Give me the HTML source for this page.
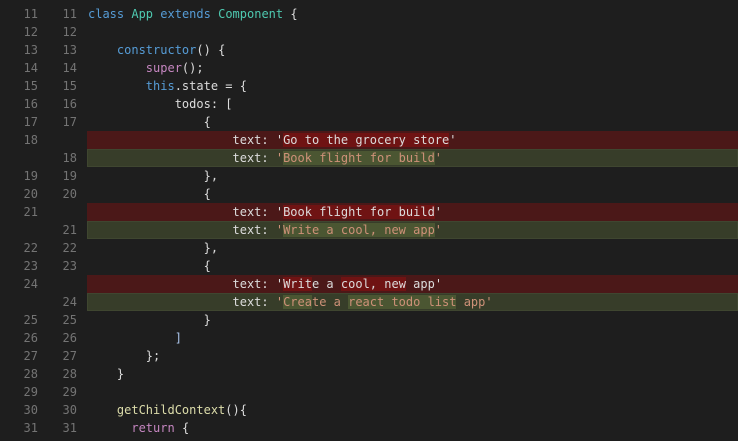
<!DOCTYPE html>
<html><head><meta charset="utf-8"><style>
html,body{margin:0;padding:0;background:#1e1e1e;width:738px;height:441px;overflow:hidden}
body{font-family:"DejaVu Sans Mono","Liberation Mono",monospace;font-size:12px;color:#dcdcdc}
.r{position:absolute;left:0;width:738px;height:18px;line-height:18px;white-space:pre}
.n1,.n2{position:absolute;top:0;width:30px;text-align:right;color:#747474}
.n1{left:8px}.n2{left:47px}
.c{position:absolute;left:88px;top:0}
.bg{position:absolute;left:87px;top:0;right:0;height:18px}
.del .bg{background:#4b1818}
.add .bg{background:#373d29;box-shadow:inset 0 0 0 1px #3f4630}
.del i{font-style:normal;background:#6f1313}
.add i{font-style:normal;background:#4b5632}
.k{color:#569cd6}.t{color:#4ec9b0}.p{color:#c586c0}.f{color:#dcdcaa}.s{color:#ce9178}
.del .s{color:#e8e8e8}
</style></head><body>
<div class="r" style="top:-13px"><span class="n1">10</span><span class="n2">10</span></div>
<div class="r" style="top:5px"><span class="n1">11</span><span class="n2">11</span><span class="c"><span class="k">class</span> <span class="t">App</span> <span class="k">extends</span> <span class="t">Component</span> {</span></div>
<div class="r" style="top:23px"><span class="n1">12</span><span class="n2">12</span></div>
<div class="r" style="top:41px"><span class="n1">13</span><span class="n2">13</span><span class="c">    <span class="k">constructor</span>() {</span></div>
<div class="r" style="top:59px"><span class="n1">14</span><span class="n2">14</span><span class="c">        <span class="p">super</span>();</span></div>
<div class="r" style="top:77px"><span class="n1">15</span><span class="n2">15</span><span class="c">        <span class="k">this</span>.state = {</span></div>
<div class="r" style="top:95px"><span class="n1">16</span><span class="n2">16</span><span class="c">            todos: [</span></div>
<div class="r" style="top:113px"><span class="n1">17</span><span class="n2">17</span><span class="c">                {</span></div>
<div class="r del" style="top:131px"><div class="bg"></div><span class="n1">18</span><span class="c">                    text: '<i>Go to the grocery store</i>'</span></div>
<div class="r add" style="top:149px"><div class="bg"></div><span class="n2">18</span><span class="c">                    text: <span class="s">'<i>Book flight for build</i>'</span></span></div>
<div class="r" style="top:167px"><span class="n1">19</span><span class="n2">19</span><span class="c">                },</span></div>
<div class="r" style="top:185px"><span class="n1">20</span><span class="n2">20</span><span class="c">                {</span></div>
<div class="r del" style="top:203px"><div class="bg"></div><span class="n1">21</span><span class="c">                    text: '<i>Book flight for build</i>'</span></div>
<div class="r add" style="top:221px"><div class="bg"></div><span class="n2">21</span><span class="c">                    text: <span class="s">'<i>Write a cool, new app</i>'</span></span></div>
<div class="r" style="top:239px"><span class="n1">22</span><span class="n2">22</span><span class="c">                },</span></div>
<div class="r" style="top:257px"><span class="n1">23</span><span class="n2">23</span><span class="c">                {</span></div>
<div class="r del" style="top:275px"><div class="bg"></div><span class="n1">24</span><span class="c">                    text: '<i>Writ</i>e a <i>cool, new</i> app'</span></div>
<div class="r add" style="top:293px"><div class="bg"></div><span class="n2">24</span><span class="c">                    text: <span class="s">'<i>Crea</i>te a <i>react todo list</i> app'</span></span></div>
<div class="r" style="top:311px"><span class="n1">25</span><span class="n2">25</span><span class="c">                }</span></div>
<div class="r" style="top:329px"><span class="n1">26</span><span class="n2">26</span><span class="c">            <span style="color:#a9c4ea">]</span></span></div>
<div class="r" style="top:347px"><span class="n1">27</span><span class="n2">27</span><span class="c">        };</span></div>
<div class="r" style="top:365px"><span class="n1">28</span><span class="n2">28</span><span class="c">    }</span></div>
<div class="r" style="top:383px"><span class="n1">29</span><span class="n2">29</span></div>
<div class="r" style="top:401px"><span class="n1">30</span><span class="n2">30</span><span class="c">    <span class="f">getChildContext</span>(){</span></div>
<div class="r" style="top:419px"><span class="n1">31</span><span class="n2">31</span><span class="c">      <span class="p">return</span> {</span></div>
</body></html>
